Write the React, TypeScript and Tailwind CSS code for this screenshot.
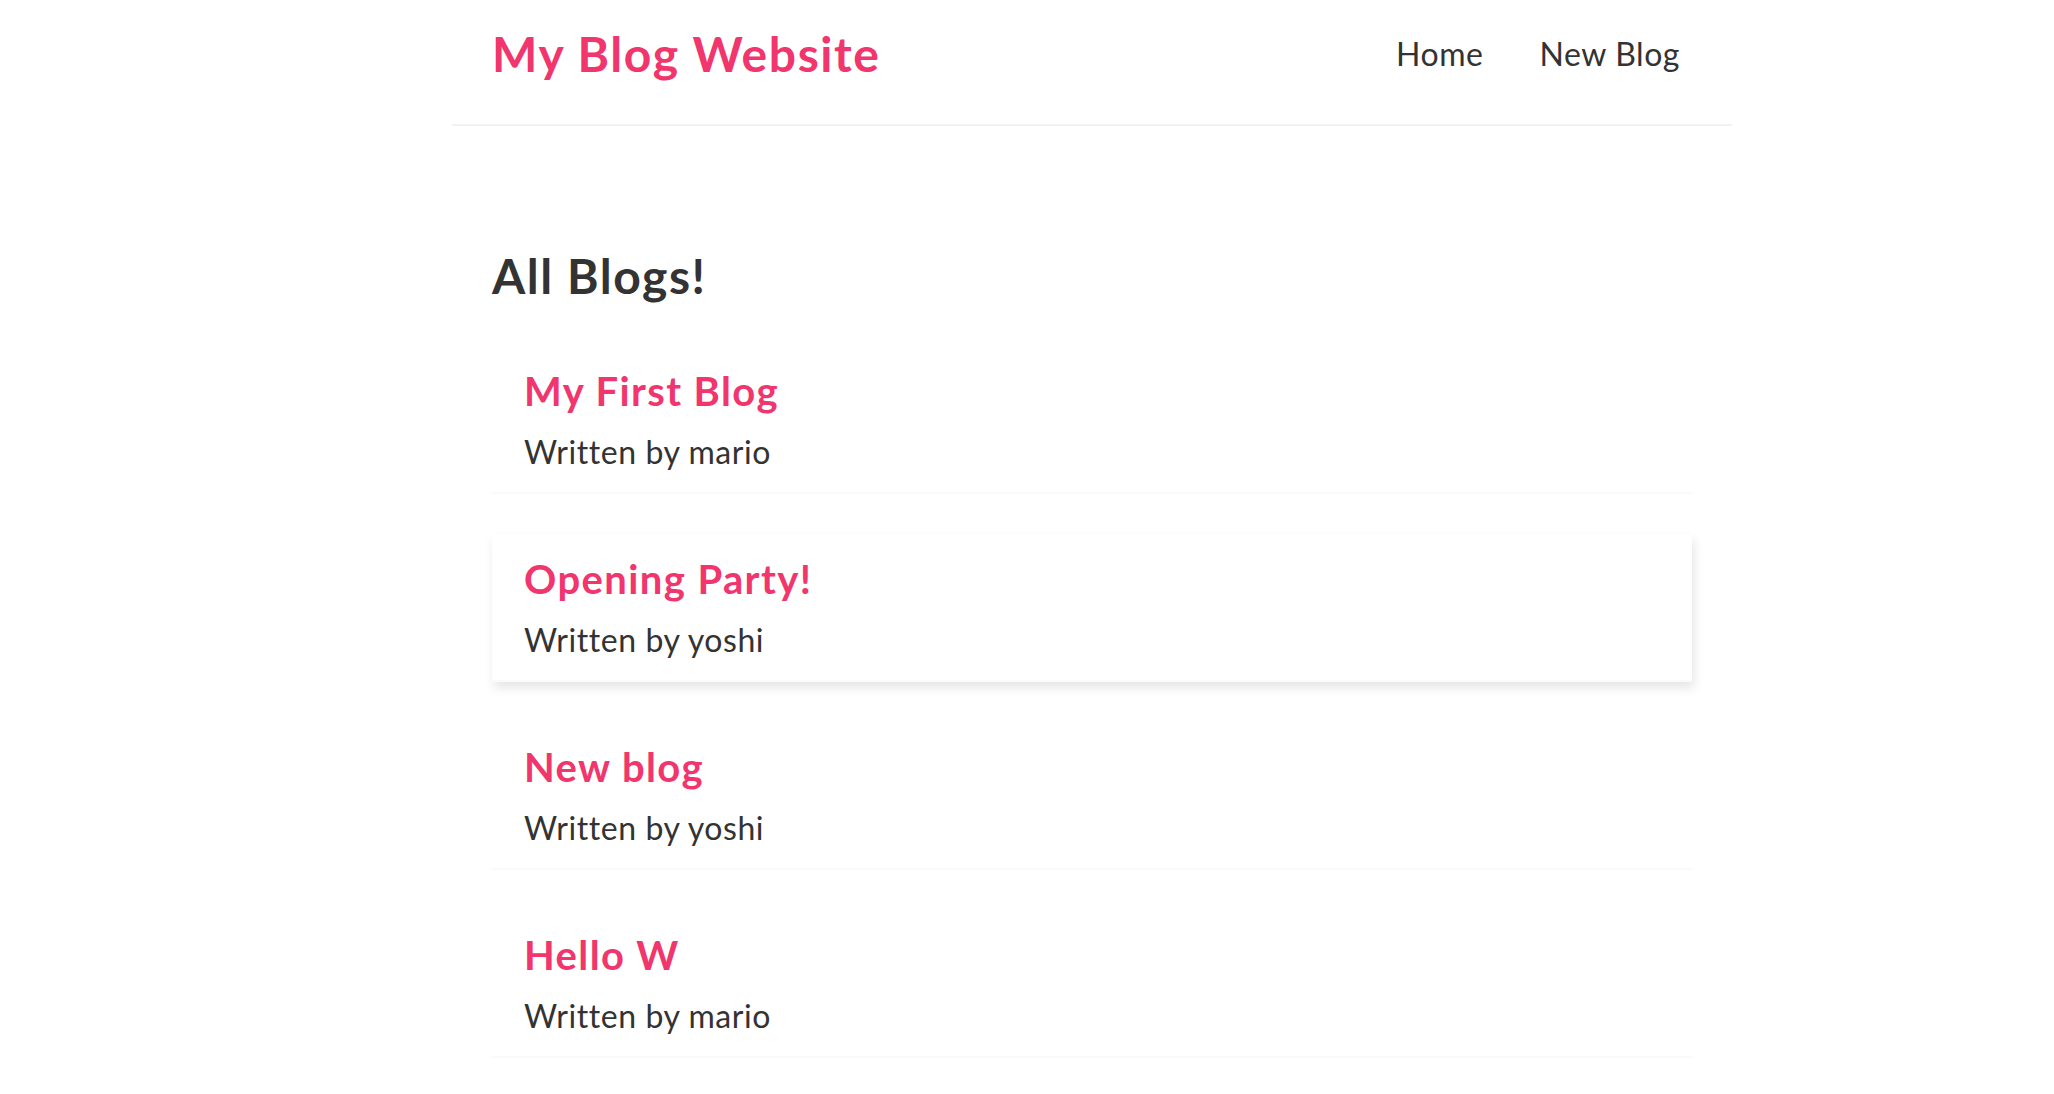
import React from "react";

const blogs = [
  { id: 1, title: "My First Blog", author: "mario" },
  { id: 2, title: "Opening Party!", author: "yoshi", hovered: true },
  { id: 3, title: "New blog", author: "yoshi" },
  { id: 4, title: "Hello W", author: "mario" },
];

export default function App() {
  return (
    <div className="min-h-screen bg-white text-[#333] font-['Lato',sans-serif] tracking-[0.035em]">
      <div className="ml-[452px] w-[1280px]">
        <nav className="flex items-center h-[126px] px-10 pb-4 border-b-2 border-[#f2f2f2]">
          <h1 className="text-[48px] leading-[60px] font-bold tracking-[0.033em] text-[#f1356d]">
            My Blog Website
          </h1>
          <div className="ml-auto flex">
            <a href="/" className="ml-8 p-3 text-[32px] leading-[40px] text-[#333]">
              Home
            </a>
            <a href="/create" className="ml-8 p-3 text-[32px] leading-[40px] text-[#333]">
              New Blog
            </a>
          </div>
        </nav>

        <main className="mt-20 px-10 pt-10">
          <h2 className="text-[48px] leading-[60px] font-bold tracking-[0.032em]">All Blogs!</h2>
          <div className="mt-10 flex flex-col gap-10">
            {blogs.map((blog) => (
              <div
                key={blog.id}
                className={
                  blog.hovered
                    ? "px-8 py-5 border-b-2 border-[#fafafa] shadow-[2px_6px_10px_rgba(0,0,0,0.1)]"
                    : "px-8 py-5 border-b-2 border-[#fafafa]"
                }
              >
                <h2 className="mb-4 text-[40px] leading-[50px] font-bold tracking-[0.035em] text-[#f1356d]">
                  {blog.title}
                </h2>
                <p className="text-[32px] leading-[40px]">Written by {blog.author}</p>
              </div>
            ))}
          </div>
        </main>
      </div>
    </div>
  );
}
